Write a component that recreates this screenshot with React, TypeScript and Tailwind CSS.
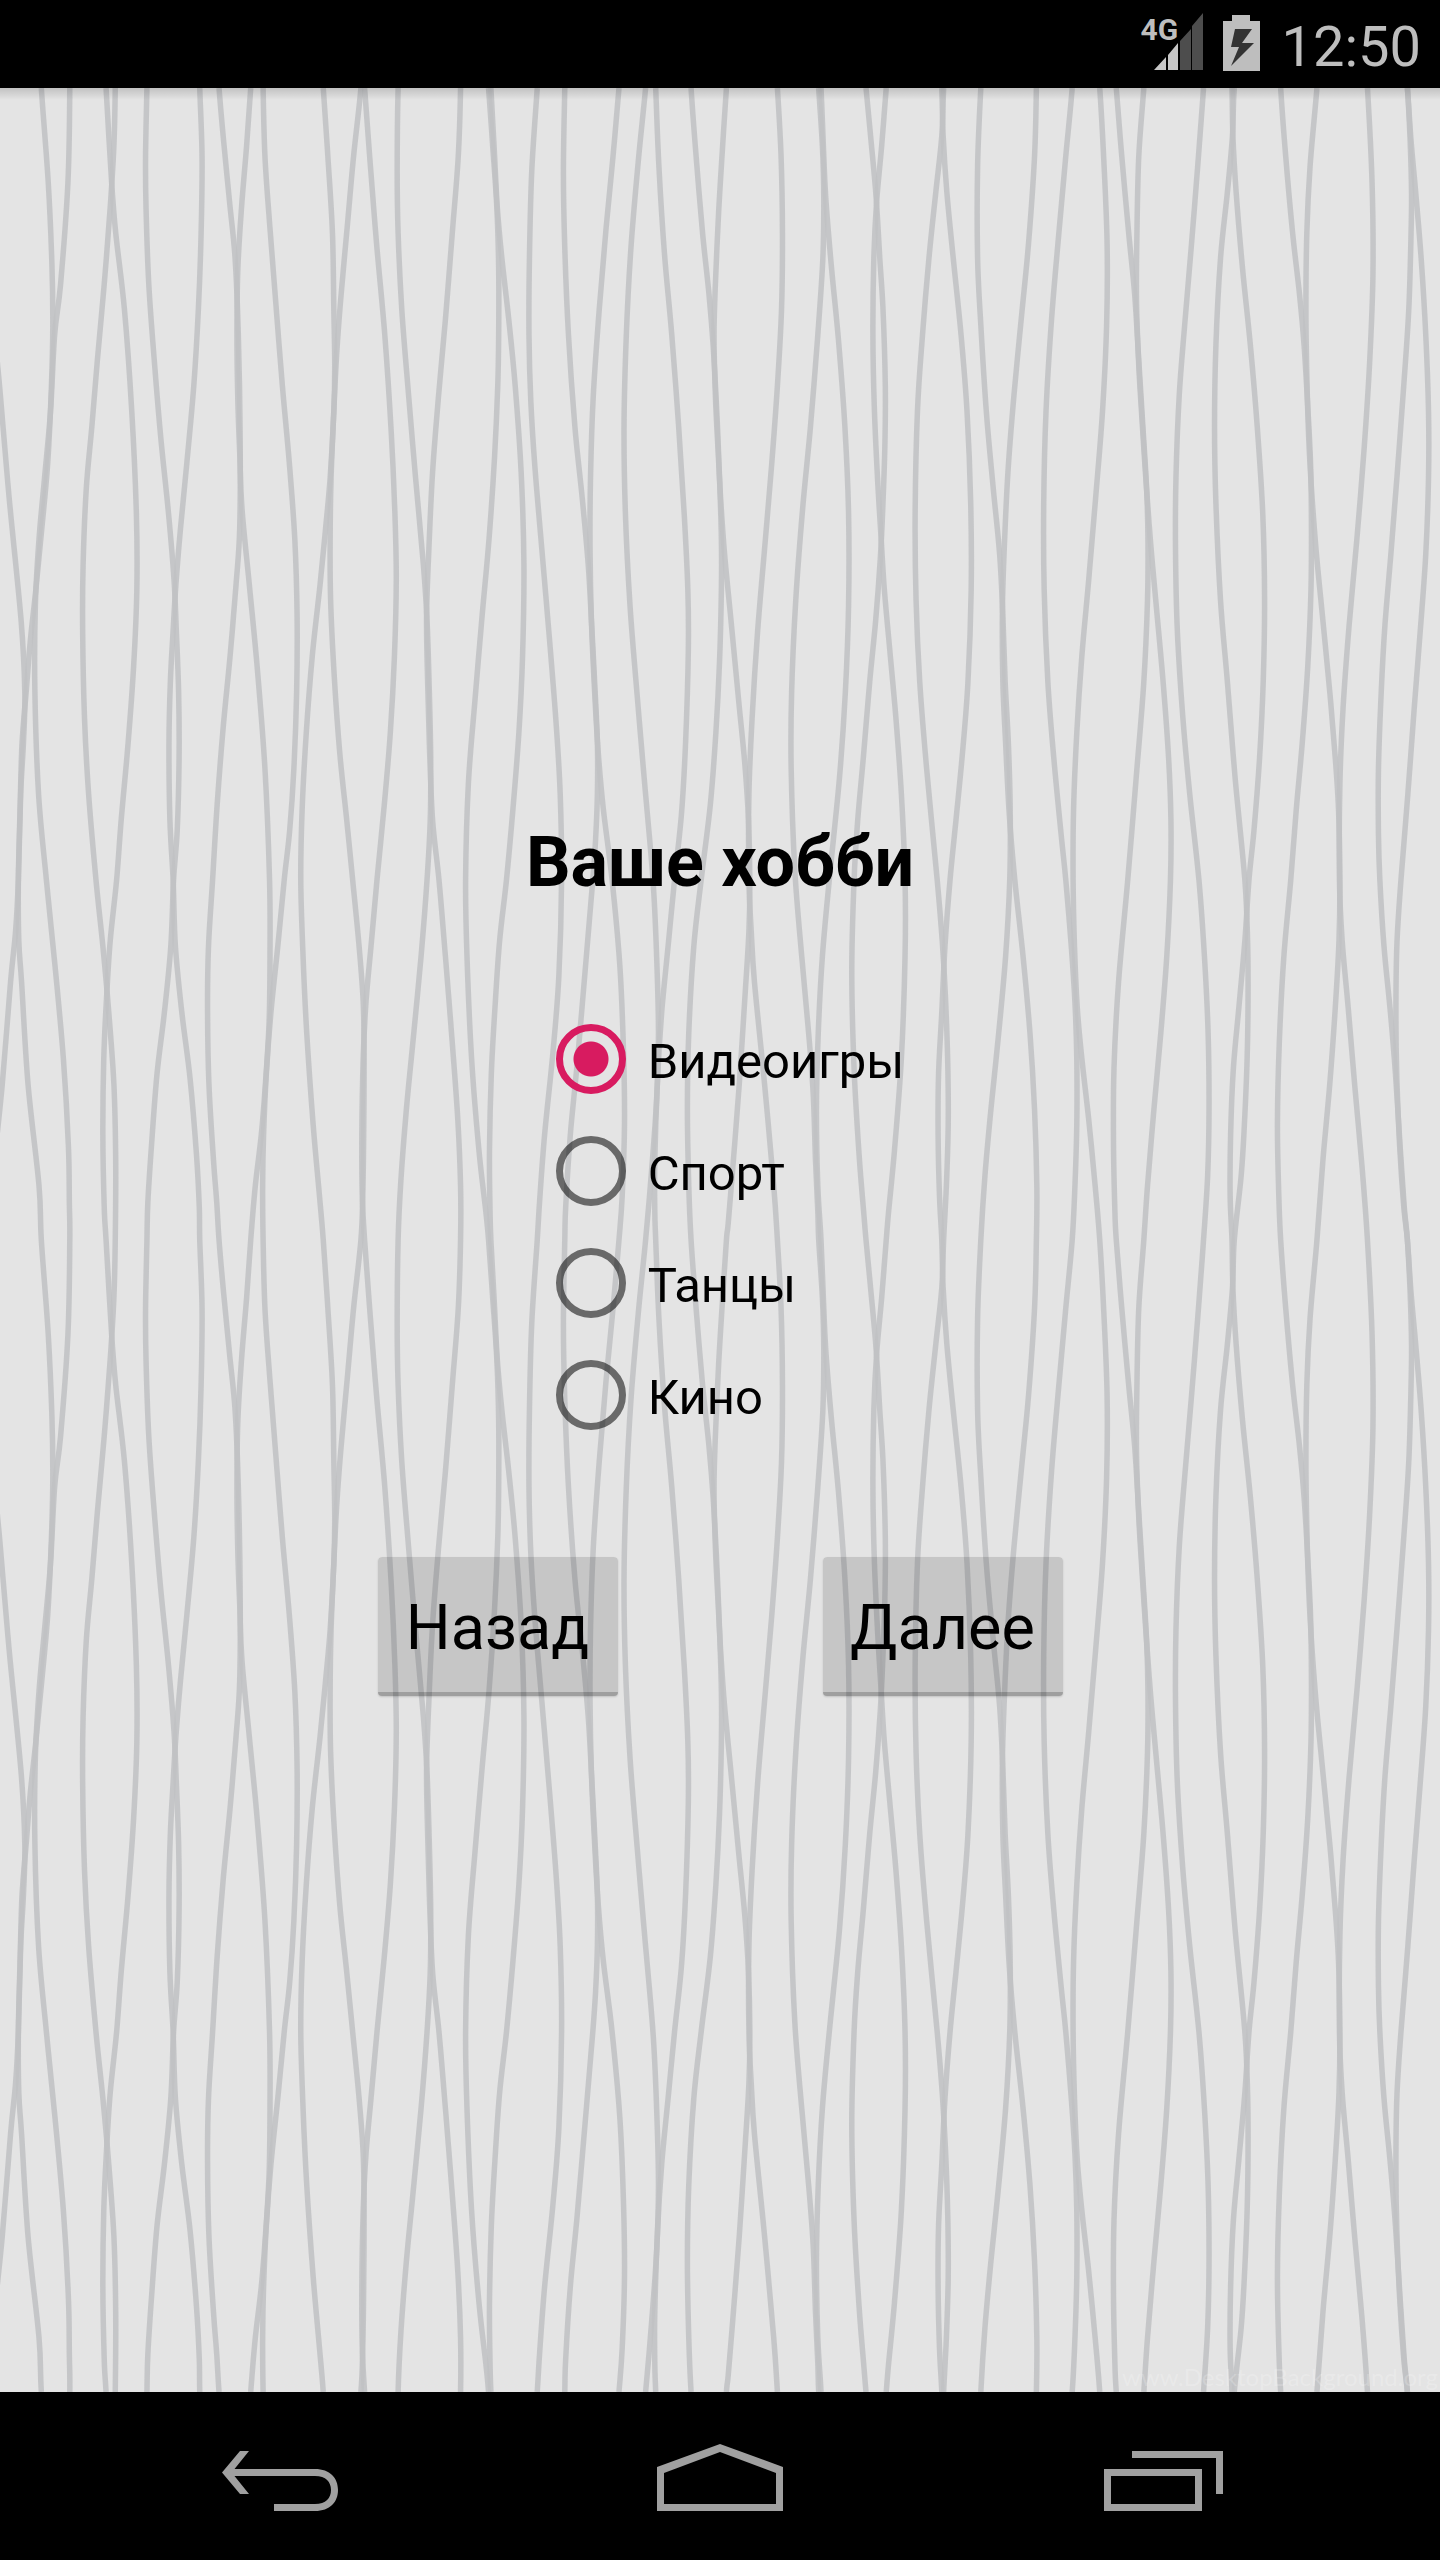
import { useState } from "react";

type Point = [number, number];

const TILE_TOP = 16;
const TILE_HEIGHT = 2258;

// One strand per row, x and y by turns; every strand closes on itself after TILE_HEIGHT.
const strands: number[][] = [
  [90, 16, 105, 200, 113, 360, 115, 480, 112, 600, 104, 750, 91, 880, 78, 1000, 66, 1100, 57, 1200, 48, 1300, 44, 1420, 40, 1568, 41, 1688, 47, 1768, 61, 1968, 85, 2168],
  [152, 16, 148, 200, 132, 400, 119, 500, 110, 650, 97, 780, 85, 900, 77, 1030, 76, 1200, 84, 1400, 101, 1568, 120, 1738, 138, 1918, 149, 2090, 151, 2200],
  [-25, 16, -22, 250, -12, 480, 0, 610, 20, 820, 46, 1060, 54, 1200, 51, 1300, 45, 1400, 40, 1568, 34, 1668, 23, 1768, 5, 1968, -12, 2120],
  [231, 16, 243, 200, 252, 300, 271, 450, 287, 650, 297, 850, 298, 1000, 291, 1150, 279, 1300, 264, 1450, 254, 1568, 240, 1688, 232, 1800, 226, 1918, 224, 2068, 227, 2210],
  [251, 16, 248, 130, 240, 250, 227, 400, 212, 550, 200, 680, 188, 800, 181, 950, 180, 1080, 184, 1250, 193, 1400, 209, 1568, 224, 1698, 236, 1818, 248, 1968, 252, 2120],
  [320, 16, 317, 150, 318, 250, 324, 400, 336, 550, 350, 700, 367, 850, 379, 980, 384, 1080, 389, 1200, 390, 1330, 386, 1470, 378, 1568, 372, 1698, 358, 1828, 342, 1948, 330, 2088, 322, 2200],
  [435, 16, 440, 150, 438, 300, 432, 450, 422, 600, 407, 750, 393, 880, 383, 990, 377, 1080, 371, 1180, 368, 1300, 370, 1450, 377, 1568, 382, 1698, 396, 1828, 414, 1958, 428, 2108, 434, 2210],
  [477, 16, 487, 120, 500, 240, 512, 350, 519, 500, 523, 700, 522, 880, 514, 990, 501, 1130, 486, 1270, 473, 1420, 463, 1568, 454, 1700, 452, 1820, 455, 1968, 465, 2118, 472, 2200],
  [546, 16, 537, 130, 526, 250, 518, 370, 516, 500, 518, 630, 522, 730, 527, 840, 543, 990, 560, 1150, 577, 1350, 587, 1568, 588, 1718, 586, 1848, 578, 1968, 569, 2068, 556, 2168],
  [573, 16, 577, 150, 587, 280, 600, 430, 615, 600, 630, 750, 642, 900, 647, 1050, 646, 1200, 640, 1350, 631, 1470, 619, 1568, 605, 1698, 590, 1828, 580, 1948, 574, 2068, 572, 2168],
  [704, 16, 714, 150, 724, 300, 727, 450, 729, 560, 727, 650, 719, 780, 709, 880, 697, 990, 680, 1130, 667, 1280, 658, 1430, 655, 1568, 660, 1718, 668, 1868, 682, 2048, 695, 2180],
  [786, 16, 770, 150, 757, 280, 742, 430, 733, 540, 727, 650, 721, 780, 719, 900, 720, 1020, 728, 1170, 740, 1320, 755, 1450, 768, 1568, 782, 1698, 791, 1808, 793, 1918, 792, 2068, 790, 2188],
  [794, 16, 805, 150, 820, 320, 838, 500, 852, 690, 860, 850, 863, 980, 859, 1130, 850, 1280, 837, 1420, 821, 1568, 808, 1698, 797, 1808, 791, 1918, 788, 2068, 789, 2188],
  [867, 16, 865, 180, 867, 300, 875, 450, 890, 620, 905, 780, 922, 950, 930, 1060, 935, 1200, 938, 1330, 937, 1450, 930, 1568, 917, 1718, 899, 1888, 885, 2018, 873, 2158],
  [1003, 16, 998, 150, 985, 300, 970, 470, 955, 620, 942, 770, 934, 920, 929, 1050, 931, 1170, 935, 1300, 942, 1450, 956, 1568, 970, 1718, 985, 1888, 997, 2038, 1003, 2168],
  [1064, 16, 1073, 130, 1082, 250, 1086, 370, 1086, 500, 1084, 600, 1077, 740, 1065, 900, 1050, 1050, 1034, 1220, 1020, 1380, 1014, 1568, 1017, 1718, 1027, 1918, 1043, 2098, 1058, 2218],
  [1069, 16, 1076, 130, 1083, 250, 1093, 350, 1108, 470, 1122, 600, 1135, 770, 1141, 950, 1138, 1130, 1130, 1280, 1117, 1430, 1103, 1568, 1088, 1688, 1078, 1818, 1070, 1948, 1066, 2098, 1067, 2208],
  [1170, 16, 1158, 180, 1153, 350, 1152, 500, 1156, 630, 1165, 760, 1180, 920, 1197, 1100, 1211, 1260, 1220, 1400, 1223, 1568, 1217, 1758, 1204, 1908, 1186, 2068, 1175, 2200],
  [1230, 16, 1227, 180, 1230, 330, 1238, 500, 1252, 680, 1268, 820, 1281, 950, 1288, 1060, 1295, 1180, 1301, 1300, 1301, 1400, 1297, 1490, 1291, 1568, 1276, 1728, 1257, 1928, 1242, 2068, 1232, 2208],
  [1348, 16, 1335, 150, 1320, 290, 1305, 450, 1292, 620, 1286, 780, 1285, 920, 1288, 1060, 1295, 1200, 1303, 1320, 1314, 1430, 1333, 1568, 1350, 1738, 1358, 1908, 1360, 2048, 1355, 2188],
  [1406, 16, 1390, 160, 1374, 330, 1364, 500, 1359, 680, 1362, 850, 1372, 1030, 1387, 1200, 1403, 1370, 1422, 1568, 1430, 1718, 1434, 1868, 1430, 1998, 1419, 2138],
  [1428, 16, 1435, 170, 1447, 340, 1463, 500, 1478, 680, 1490, 850, 1498, 1000, 1499, 1120, 1493, 1300, 1484, 1440, 1469, 1568, 1455, 1698, 1441, 1828, 1432, 1958, 1426, 2118, 1426, 2218],
  [1505, 16, 1516, 150, 1530, 300, 1544, 420, 1553, 520, 1561, 650, 1567, 780, 1571, 900, 1571, 1000, 1567, 1140, 1559, 1280, 1547, 1420, 1527, 1568, 1511, 1698, 1500, 1868, 1497, 2018, 1500, 2168],
  [1582, 16, 1573, 140, 1565, 260, 1558, 400, 1555, 500, 1558, 620, 1564, 730, 1570, 830, 1578, 930, 1592, 1060, 1609, 1220, 1622, 1340, 1630, 1450, 1633, 1568, 1631, 1668, 1623, 1788, 1610, 1968, 1598, 2108, 1586, 2240],
  [1693, 16, 1701, 150, 1704, 300, 1702, 450, 1693, 600, 1680, 760, 1665, 920, 1650, 1080, 1638, 1250, 1631, 1400, 1631, 1568, 1636, 1668, 1643, 1768, 1665, 1968, 1685, 2168],
  [1783, 16, 1791, 130, 1794, 230, 1792, 350, 1781, 500, 1765, 680, 1748, 840, 1733, 1020, 1724, 1200, 1723, 1350, 1731, 1550, 1746, 1718, 1761, 1868, 1771, 1988, 1776, 2118, 1781, 2218],
  [1788, 16, 1794, 150, 1799, 240, 1811, 370, 1826, 510, 1840, 680, 1848, 850, 1848, 1030, 1841, 1200, 1828, 1370, 1806, 1568, 1791, 1718, 1782, 1868, 1778, 2018, 1781, 2168],
  [1886, 16, 1897, 120, 1908, 230, 1916, 350, 1923, 450, 1928, 600, 1927, 720, 1922, 850, 1917, 940, 1907, 1060, 1894, 1180, 1880, 1330, 1868, 1450, 1860, 1568, 1855, 1748, 1860, 1938, 1871, 2108, 1881, 2220],
  [1930, 16, 1920, 130, 1909, 240, 1903, 350, 1901, 500, 1904, 640, 1911, 780, 1919, 900, 1926, 1000, 1938, 1120, 1951, 1250, 1963, 1400, 1971, 1568, 1971, 1718, 1963, 1918, 1948, 2098, 1935, 2220],
  [2055, 16, 2051, 110, 2038, 220, 2023, 350, 2009, 500, 1998, 650, 1993, 850, 1995, 1020, 2003, 1180, 2018, 1350, 2041, 1568, 2052, 1688, 2059, 1798, 2064, 1928, 2065, 2048, 2061, 2168],
  [2051, 16, 2054, 110, 2062, 220, 2076, 350, 2093, 500, 2106, 650, 2114, 830, 2115, 1000, 2108, 1180, 2096, 1320, 2082, 1450, 2069, 1568, 2058, 1698, 2051, 1828, 2044, 1948, 2043, 2068, 2046, 2188],
  [2136, 16, 2129, 170, 2129, 350, 2136, 480, 2148, 650, 2163, 800, 2177, 930, 2184, 1050, 2189, 1180, 2196, 1300, 2200, 1430, 2199, 1568, 2190, 1718, 2175, 1868, 2158, 2018, 2145, 2148],
  [2257, 16, 2253, 150, 2240, 320, 2225, 460, 2208, 620, 2195, 770, 2187, 920, 2183, 1040, 2184, 1180, 2190, 1300, 2198, 1440, 2210, 1568, 2228, 1718, 2243, 1868, 2253, 2018, 2258, 2168],
  [2335, 16, 2321, 150, 2306, 300, 2290, 470, 2278, 650, 2273, 830, 2274, 1000, 2282, 1180, 2295, 1330, 2311, 1480, 2321, 1568, 2333, 1698, 2341, 1808, 2345, 1918, 2345, 2048, 2341, 2168],
  [2395, 16, 2404, 160, 2411, 320, 2410, 480, 2401, 650, 2386, 820, 2371, 980, 2356, 1130, 2345, 1280, 2338, 1430, 2337, 1568, 2340, 1698, 2346, 1818, 2356, 1918, 2371, 2038, 2385, 2168],
  [2431, 16, 2443, 150, 2458, 300, 2471, 420, 2480, 550, 2489, 680, 2497, 800, 2500, 900, 2499, 1020, 2491, 1180, 2476, 1350, 2456, 1568, 2436, 1768, 2426, 1938, 2425, 2088, 2428, 2218],
  [2491, 16, 2480, 150, 2476, 300, 2475, 430, 2480, 560, 2488, 680, 2496, 790, 2506, 910, 2518, 1030, 2533, 1180, 2545, 1330, 2550, 1450, 2549, 1568, 2541, 1718, 2528, 1868, 2513, 2018, 2499, 2168],
  [2621, 16, 2610, 150, 2595, 320, 2580, 480, 2568, 620, 2561, 780, 2560, 920, 2564, 1080, 2576, 1250, 2591, 1400, 2611, 1568, 2623, 1718, 2631, 1868, 2633, 2018, 2630, 2148],
  [2688, 16, 2684, 110, 2673, 220, 2658, 350, 2648, 520, 2645, 680, 2648, 830, 2658, 1020, 2673, 1180, 2690, 1370, 2711, 1568, 2717, 1688, 2718, 1798, 2716, 1918, 2710, 2048, 2703, 2148],
  [2683, 16, 2685, 110, 2692, 220, 2706, 370, 2723, 520, 2738, 680, 2750, 850, 2754, 1020, 2751, 1180, 2743, 1330, 2731, 1470, 2720, 1568, 2711, 1688, 2698, 1818, 2686, 1938, 2680, 2068, 2679, 2188],
  [2789, 16, 2800, 150, 2815, 300, 2830, 420, 2840, 520, 2848, 640, 2854, 750, 2856, 870, 2855, 1000, 2848, 1150, 2836, 1300, 2823, 1430, 2811, 1568, 2796, 1718, 2786, 1888, 2782, 2048, 2785, 2188],
  [2868, 16, 2853, 170, 2846, 300, 2844, 450, 2846, 580, 2850, 700, 2856, 800, 2866, 920, 2881, 1060, 2896, 1200, 2908, 1330, 2915, 1430, 2918, 1568, 2916, 1688, 2908, 1818, 2896, 1968, 2881, 2118],
  [2978, 16, 2988, 200, 2990, 380, 2983, 550, 2971, 720, 2955, 900, 2938, 1070, 2925, 1230, 2918, 1380, 2917, 1568, 2923, 1688, 2936, 1818, 2950, 1968, 2966, 2128],
  [3065, 16, 3071, 120, 3074, 220, 3073, 300, 3068, 450, 3057, 600, 3043, 770, 3029, 930, 3016, 1070, 3008, 1200, 3002, 1350, 3002, 1480, 3005, 1568, 3014, 1698, 3028, 1828, 3039, 1948, 3049, 2088, 3058, 2208],
  [3065, 16, 3073, 120, 3083, 220, 3095, 350, 3105, 500, 3111, 650, 3111, 780, 3105, 930, 3093, 1080, 3080, 1230, 3066, 1400, 3051, 1568, 3042, 1698, 3040, 1838, 3042, 1958, 3048, 2088, 3057, 2208],
];

// Smooth closed-period curve through the sampled points (Catmull-Rom as cubic Béziers).
function strandPath(flat: number[]): string {
  const base: Point[] = [];
  for (let i = 0; i < flat.length; i += 2) base.push([flat[i], flat[i + 1] - TILE_TOP]);
  const n = base.length;
  const at = (i: number): Point => {
    const turn = Math.floor(i / n);
    const p = base[i - turn * n];
    return [p[0], p[1] + turn * TILE_HEIGHT];
  };
  let d = `M${base[0][0]} ${base[0][1]}`;
  for (let i = 0; i < n * 2; i++) {
    const [a, b, c, e] = [at(i - 1), at(i), at(i + 1), at(i + 2)];
    d += `C${b[0] + (c[0] - a[0]) / 6} ${b[1] + (c[1] - a[1]) / 6} ${c[0] - (e[0] - b[0]) / 6} ${c[1] - (e[1] - b[1]) / 6} ${c[0]} ${c[1]}`;
  }
  return d;
}

const strandPaths = strands.map(strandPath);

function Wallpaper() {
  return (
    <svg
      aria-hidden="true"
      className="absolute inset-0 h-full w-full"
      viewBox="0 0 3136 4516"
      preserveAspectRatio="none"
      fill="none"
      stroke="#bfc1c3"
      strokeOpacity="0.85"
      strokeWidth="12"
    >
      {strandPaths.map((d, i) => (
        <path key={i} d={d} />
      ))}
    </svg>
  );
}

function StatusBar() {
  return (
    <header className="flex h-[88px] items-center justify-end bg-black pr-[19px] text-[#bebebe]">
      <div className="relative h-[88px] w-[64px]">
        <svg aria-hidden="true" className="h-[88px] w-[64px]" viewBox="0 0 64 88">
          <path fill="#c6c6c6" d="M15 70 27 57V70ZM29 55 39 43V70H29Z" />
          <path fill="#4d4d4d" d="M41 41 52 29V70H41ZM53 26 64 13V70H53Z" />
        </svg>
        <span className="absolute top-3 left-0.5 text-[30px] leading-[36px] font-bold">4G</span>
      </div>
      <svg aria-label="Зарядка" role="img" className="ml-5 h-[88px] w-[37px]" viewBox="0 0 37 88">
        <path fill="#bebebe" d="M9 15H27V21H37V71H0V21H9Z" />
        <path fill="#333" d="M12 29H29L19 43H31L8 66 16 47H8Z" />
      </svg>
      <time className="ml-[22px] pt-1.5 text-[56px] leading-[66px]">12:50</time>
    </header>
  );
}

const hobbies = ["Видеоигры", "Спорт", "Танцы", "Кино"];

function HobbyOption({ label, checked, onSelect }: { label: string; checked: boolean; onSelect: () => void }) {
  return (
    <label className="flex h-28 items-center">
      <input
        type="radio"
        name="hobby"
        checked={checked}
        onChange={onSelect}
        className="mr-[22px] ml-5 h-[70px] w-[70px] shrink-0 appearance-none rounded-full border-[7px] border-black/54 checked:border-[#d81b60] checked:bg-[radial-gradient(circle,#d81b60_17px,transparent_18px)]"
      />
      <span className="pt-1.5 text-[49px] leading-[58px]">{label}</span>
    </label>
  );
}

function HoloButton({ children }: { children: string }) {
  return (
    <button
      type="button"
      className="h-[139px] w-60 rounded-[4px] border-b-4 border-black/30 bg-black/13 bg-clip-padding pt-2 text-[63px] leading-[74px] shadow-[0_1px_2px_rgba(0,0,0,0.15)]"
    >
      {children}
    </button>
  );
}

function NavButton({ label, d }: { label: string; d: string }) {
  return (
    <button type="button" aria-label={label} className="h-[168px] w-[280px]">
      <svg aria-hidden="true" className="h-full w-full" viewBox="0 0 280 168">
        <path d={d} fill="#a0a0a0" fillRule="evenodd" />
      </svg>
    </button>
  );
}

export default function App() {
  const [hobby, setHobby] = useState(hobbies[0]);
  return (
    <div className="flex min-h-screen flex-col bg-black font-[Roboto,sans-serif] text-black">
      <StatusBar />
      <main className="relative flex flex-1 flex-col overflow-hidden bg-[#e4e4e4]">
        <Wallpaper />
        <span className="absolute right-0.5 bottom-0 font-[Lato,sans-serif] text-[24px] leading-[30px] text-white/20">
          www.DesktopBackground.org
        </span>
        <div className="absolute inset-x-0 top-0 h-3 bg-linear-to-b from-black/15 to-transparent" />
        <form className="relative flex flex-1 flex-col items-center justify-center pt-9">
          <h1 className="text-[70px] leading-[82px] font-bold">Ваше хобби</h1>
          <div role="radiogroup" aria-label="Ваше хобби" className="mt-[100px] flex flex-col">
            {hobbies.map((h) => (
              <HobbyOption key={h} label={h} checked={h === hobby} onSelect={() => setHobby(h)} />
            ))}
          </div>
          <div className="mt-[106px] flex gap-[205px]">
            <HoloButton>Назад</HoloButton>
            <HoloButton>Далее</HoloButton>
          </div>
        </form>
      </main>
      <nav className="flex h-[168px] justify-center gap-40">
        <NavButton
          label="Назад"
          d="M82 80.500 100 59H109L94.500 77H175C190 77 198 86 198 98S190 119 175 119H134V112H175C186 112 191 106 191 98S186 84 175 84H94.500L109 102H100Z"
        />
        <NavButton label="Домой" d="M77 75 140 52 203 75V119H77ZM84 81V112H196V81L140 60Z" />
        <NavButton label="Недавние" d="M84 77H182V119H84ZM91 84V112H175V84ZM112 59H203V102H196V66H112Z" />
      </nav>
    </div>
  );
}
